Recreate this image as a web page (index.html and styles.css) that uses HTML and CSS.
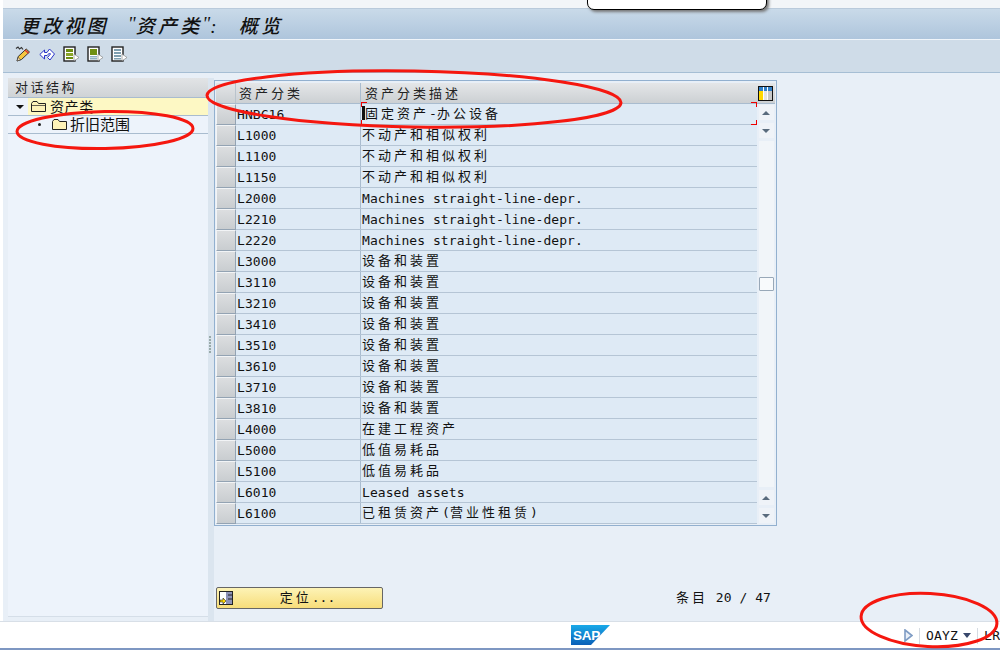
FILE: index.html
```html
<!DOCTYPE html>
<html lang="zh">
<head>
<meta charset="utf-8">
<title>更改视图 "资产类": 概览</title>
<link rel="stylesheet" href="styles.css">
</head>
<body>
<div class="app">
  <div class="topstrip"></div>
  <div class="window">
    <div class="title">更改视图 <span class="q">"</span>资产类<span class="q">"</span>: 概览</div>
    <div class="toolbar">
      <svg class="tool" viewBox="0 0 16 16"><path d="M1 2.500l2-1.500 1.500 2 2-1.500 1.500 2" fill="none" stroke="#333" stroke-width="1.2"/><path d="M2 15l1.200-4.500 8-7.500 3.300 3-8 7.500z" fill="#f6c63e" stroke="#333"/><path d="M10 4l3.500 3.200" stroke="#d33" stroke-width="1.500"/><path d="M2 15l1.200-3.500 2.300 2.200z" fill="#fbe3b8" stroke="#333" stroke-width=".5"/></svg>
      <svg class="tool" viewBox="0 0 16 16"><path d="M.8 8.500L5.500 4v2.500H8L10.500 3l5 5-4.500 6-2.500-2.500L11.500 8l-1-1L8 9.500H5.500V13z" fill="#fff" stroke="#2a34c8"/></svg>
      <svg class="tool" viewBox="0 0 16 16"><rect x="1" y="1" width="11" height="14" fill="#fff" stroke="#222" stroke-width="1.400"/><rect x="3" y="3" width="7" height="3" fill="#6f8f12"/><rect x="3" y="7" width="7" height="3" fill="#8aa52a"/><rect x="3" y="11" width="7" height="2" fill="#6f8f12"/><path d="M11 8l5 3.500-5 3.500z" fill="#fff" stroke="#777" stroke-width=".6"/></svg>
      <svg class="tool" viewBox="0 0 16 16"><rect x="1" y="1" width="11" height="14" fill="#fff" stroke="#222" stroke-width="1.400"/><rect x="3" y="3" width="7" height="6" fill="#6f8f12"/><rect x="3" y="10" width="7" height="1.500" fill="#8fb0c0"/><rect x="3" y="12" width="7" height="1.500" fill="#8fb0c0"/><path d="M11 8l5 3.500-5 3.500z" fill="#fff" stroke="#777" stroke-width=".6"/></svg>
      <svg class="tool" viewBox="0 0 16 16"><rect x="1" y="1" width="11" height="14" fill="#fff" stroke="#222" stroke-width="1.400"/><rect x="3" y="3" width="7" height="2" fill="#7f9fb0"/><rect x="3" y="6" width="7" height="2" fill="#7f9fb0"/><rect x="3" y="9" width="7" height="2" fill="#7f9fb0"/><rect x="3" y="12" width="7" height="1.500" fill="#7f9fb0"/><path d="M11 8l5 3.500-5 3.500z" fill="#fff" stroke="#777" stroke-width=".6"/></svg>
    </div>
    <div class="main">
      <aside class="tree">
        <div class="tree-head">对话结构</div>
        <div class="tree-row">
          <span class="arrow-down"></span>
          <div class="tree-sel">
            <svg class="folder" viewBox="0 0 15 11"><path d="M.5 10.500V2.500l1.500-2h4l1.500 2h7v8z" fill="#fdf2b8" stroke="#222"/><path d="M.5 4.500h14" stroke="#222" stroke-width=".7"/></svg>
            <span class="tree-text">资产类</span>
          </div>
        </div>
        <div class="tree-row sub">
          <span class="dot"></span>
          <svg class="folder" viewBox="0 0 15 11"><path d="M.5 10.500V2.500l1.500-2h4l1.500 2h7v8z" fill="#fdf2b8" stroke="#222"/></svg>
          <span class="tree-text plain">折旧范围</span>
        </div>
      </aside>
      <div class="sash"><i></i><i></i><i></i><i></i><i></i><i></i></div>
      <section class="content">
        <div class="table">
          <div class="thead">
            <div class="corner"></div>
            <div class="th c1">资产分类</div>
            <div class="th c2 th-desc">资产分类描述</div>
            <div class="settings">
              <svg viewBox="0 0 15 15"><rect x=".5" y=".5" width="14" height="14" fill="#fff" stroke="#111"/><rect x="1" y="1" width="4" height="4" fill="#2f7fc8"/><rect x="6" y="1" width="3" height="4" fill="#2f7fc8"/><rect x="10" y="1" width="4" height="4" fill="#2f7fc8"/><rect x="1" y="5" width="4" height="9" fill="#ffd800"/><rect x="6" y="5" width="3" height="9" fill="#e4e4e4"/><rect x="10" y="5" width="4" height="9" fill="#c8c8c8"/></svg>
            </div>
          </div>
          <div class="tbody">
            <div class="rows">
              <div class="row"><div class="sel"></div><div class="c1 code">HNBC16</div><div class="c2 desc"><b class="caret"></b>固定资产<span class="lat">-</span>办公设备<i class="mark left top"></i><i class="mark left bottom"></i><i class="mark right top"></i><i class="mark right bottom"></i></div></div>
              <div class="row"><div class="sel"></div><div class="c1 code">L1000</div><div class="c2 desc">不动产和相似权利</div></div>
              <div class="row"><div class="sel"></div><div class="c1 code">L1100</div><div class="c2 desc">不动产和相似权利</div></div>
              <div class="row"><div class="sel"></div><div class="c1 code">L1150</div><div class="c2 desc">不动产和相似权利</div></div>
              <div class="row"><div class="sel"></div><div class="c1 code">L2000</div><div class="c2 desc lat">Machines straight-line-depr.</div></div>
              <div class="row"><div class="sel"></div><div class="c1 code">L2210</div><div class="c2 desc lat">Machines straight-line-depr.</div></div>
              <div class="row"><div class="sel"></div><div class="c1 code">L2220</div><div class="c2 desc lat">Machines straight-line-depr.</div></div>
              <div class="row"><div class="sel"></div><div class="c1 code">L3000</div><div class="c2 desc">设备和装置</div></div>
              <div class="row"><div class="sel"></div><div class="c1 code">L3110</div><div class="c2 desc">设备和装置</div></div>
              <div class="row"><div class="sel"></div><div class="c1 code">L3210</div><div class="c2 desc">设备和装置</div></div>
              <div class="row"><div class="sel"></div><div class="c1 code">L3410</div><div class="c2 desc">设备和装置</div></div>
              <div class="row"><div class="sel"></div><div class="c1 code">L3510</div><div class="c2 desc">设备和装置</div></div>
              <div class="row"><div class="sel"></div><div class="c1 code">L3610</div><div class="c2 desc">设备和装置</div></div>
              <div class="row"><div class="sel"></div><div class="c1 code">L3710</div><div class="c2 desc">设备和装置</div></div>
              <div class="row"><div class="sel"></div><div class="c1 code">L3810</div><div class="c2 desc">设备和装置</div></div>
              <div class="row"><div class="sel"></div><div class="c1 code">L4000</div><div class="c2 desc">在建工程资产</div></div>
              <div class="row"><div class="sel"></div><div class="c1 code">L5000</div><div class="c2 desc">低值易耗品</div></div>
              <div class="row"><div class="sel"></div><div class="c1 code">L5100</div><div class="c2 desc">低值易耗品</div></div>
              <div class="row"><div class="sel"></div><div class="c1 code">L6010</div><div class="c2 desc lat">Leased assets</div></div>
              <div class="row"><div class="sel"></div><div class="c1 code">L6100</div><div class="c2 desc">已租赁资产<span class="lat">(</span>营业性租赁<span class="lat">)</span></div></div>
            </div>
            <div class="scroll">
              <div class="sb-btn"><span class="tri-up"></span></div>
              <div class="sb-btn"><span class="tri-down"></span></div>
              <div class="track"><div class="thumb"></div></div>
              <div class="sb-btn"><span class="tri-up"></span></div>
              <div class="sb-btn"><span class="tri-down"></span></div>
            </div>
          </div>
        </div>
        <div class="footer">
          <div class="btn">
            <svg class="btn-icon" viewBox="0 0 14 14"><rect x=".5" y=".5" width="13" height="13" fill="#8d92b8" stroke="#222"/><rect x="1" y="1" width="6" height="12" fill="#fff"/><path d="M9 4h4M9 8h4" stroke="#222"/><path d="M1 9h3V7l3 3-3 3v-2H1z" fill="#ffd800" stroke="#222" stroke-width=".6"/></svg>
            <span class="btn-text">定位<span class="lat">...</span></span>
          </div>
          <div class="entries">条目<span class="lat"> 20 / 47</span></div>
        </div>
      </section>
    </div>
  </div>
  <footer class="status">
    <svg class="sap" viewBox="0 0 39 20"><defs><linearGradient id="sapg" x1="0" y1="0" x2="0" y2="1"><stop offset="0" stop-color="#19a9e8"/><stop offset="1" stop-color="#0a5fb8"/></linearGradient></defs><path d="M0 0h39L20 20H0z" fill="url(#sapg)"/><text x="2" y="14.500" class="sap-text">SAP</text></svg>
    <div class="status-right">
      <svg class="play" viewBox="0 0 9 13"><path d="M1 1l7 5.500-7 5.500z" fill="#eaf0f8" stroke="#7f9cc4" stroke-width="1.600"/></svg>
      <span class="status-sep"></span>
      <span class="sys">OAYZ</span>
      <span class="tri-status"></span>
      <span class="status-sep"></span>
      <span class="sys host">LR</span>
    </div>
  </footer>
  <div class="bottomline"></div>

  <div class="popup"></div>
  <svg class="marks" viewBox="0 0 1000 650">
    <ellipse cx="414" cy="99" rx="207" ry="28" transform="rotate(1 414 99)"/>
    <ellipse cx="105" cy="130" rx="88" ry="18.500" transform="rotate(-1 105 130)"/>
    <ellipse cx="929" cy="620" rx="68" ry="26.500" transform="rotate(3 929 620)"/>
  </svg>
</div>
</body>
</html>
```
FILE: styles.css
```css
* { box-sizing: border-box; }
html, body { margin: 0; height: 100%; overflow: hidden; background: #fff; }
body { font-family: "DejaVu Sans Mono", "Noto Sans CJK SC", monospace; color: #111; }
.app { position: relative; width: 1000px; height: 650px; display: flex; flex-direction: column; overflow: hidden; }
.topstrip { height: 9px; margin-left: 3px; background: #f2f5f8; border-bottom: 1px solid #b9cadb; flex: none; }
.window { flex: 1; min-height: 0; margin-left: 3px; display: flex; flex-direction: column; background: #e8eff7; }
.title { height: 31px; flex: none; padding-left: 17px; display: flex; align-items: center; font-size: 19px; font-style: italic; font-weight: 500; letter-spacing: 3.200px; word-spacing: 11px; white-space: pre; color: #111; font-family: "Liberation Serif", "Noto Sans CJK SC", serif; background: linear-gradient(#c9dae9, #aec5dc); border-bottom: 1px solid #f0f5fa; }
.q { letter-spacing: 0; }
.toolbar { height: 33px; flex: none; display: flex; align-items: center; gap: 8px; padding: 0 0 4px 12px; background: #cfdce8; border-bottom: 1px solid #a6bed4; }
.tool { width: 16px; height: 16px; }
.main { flex: 1; min-height: 0; display: flex; padding: 5px 0 0 5px; }
.tree { width: 200px; flex: none; height: 539px; background: #edf3fb; border-bottom: 1px solid #d5dee8; }
.tree-head { height: 20px; padding-left: 7px; font-size: 13px; line-height: 20px; letter-spacing: 2.500px; color: #222; background: linear-gradient(#e2e4e6, #cfd3d6); border-bottom: 1px solid #a9bccf; }
.tree-row { height: 18px; display: flex; align-items: center; border-bottom: 1px solid #a9bccf; padding-left: 8px; }
.tree-row.sub { padding-left: 30px; }
.arrow-down { width: 0; height: 0; border-left: 4px solid transparent; border-right: 4px solid transparent; border-top: 4px solid #111; margin-right: 4px; }
.tree-sel { flex: 1; height: 17px; display: flex; align-items: center; padding-left: 3px; background: #fdf8c4; }
.dot { width: 3px; height: 3px; border-radius: 50%; background: #222; margin-right: 11px; }
.folder { width: 15px; height: 11px; flex: none; margin-right: 4px; }
.tree-text { font-size: 14px; letter-spacing: .6px; line-height: 16px; }
.tree-text.plain { font-size: 15px; letter-spacing: 0; margin-left: -1px; }
.sash { width: 6px; flex: none; display: flex; flex-direction: column; align-items: center; justify-content: center; gap: 1px; background: #dbe5ef; padding: 0 2px 11px 0; }
.sash i { width: 2px; height: 2px; background: #9aa; flex: none; }
.content { flex: 1; min-width: 0; display: flex; flex-direction: column; padding-top: 2px; }
.table { width: 563px; height: 446px; border: 1px solid #92b0cf; padding: 2px 1px 1px; background: #e8eff7; display: flex; flex-direction: column; flex: none; }
.thead { height: 21px; flex: none; display: flex; background: linear-gradient(#e4e6e8, #ccd0d3); border-bottom: 1px solid #a9bccf; }
.corner { width: 20px; flex: none; border-right: 1px solid #b9c3cc; }
.th { font-size: 13px; line-height: 21px; letter-spacing: 3px; padding-left: 3px; color: #222; }
.th-desc { padding-left: 4px; }
.c1 { width: 125px; flex: none; border-right: 1px solid #a9bccf; }
.c2 { flex: 1; min-width: 0; }
.settings { width: 19px; flex: none; display: flex; align-items: center; justify-content: center; }
.settings svg { width: 15px; height: 15px; }
.tbody { flex: 1; min-height: 0; display: flex; }
.rows { width: 541px; flex: none; display: flex; flex-direction: column; }
.row { height: 21px; flex: none; display: flex; background: #deeaf5; border-bottom: 1px solid #b5c5d5; }
.sel { width: 20px; flex: none; margin: 0 0 -1px 0; background: linear-gradient(#dcdee0, #c9cdd0); border: 1px solid #f2f4f6; border-right: 1px solid #93a3b3; border-bottom: 1px solid #93a3b3; }
.code { font-size: 13px; line-height: 20px; padding: 1px 0 0 1px; letter-spacing: .05px; }
.desc { position: relative; font-size: 13px; line-height: 20px; padding-left: 1px; letter-spacing: 3px; white-space: nowrap; }
.lat { letter-spacing: .06px; }
.desc.lat { letter-spacing: .06px; padding-top: 1px; }
.caret { display: inline-block; width: 3px; height: 14px; background: #111; vertical-align: -2px; }
.mark { position: absolute; width: 6px; height: 5px; border: 0 solid #e00; }
.mark.top { top: -2px; border-top-width: 1px; }
.mark.bottom { bottom: -1px; border-bottom-width: 1px; }
.mark.left { left: 0; border-left-width: 1px; }
.mark.right { right: 0; border-right-width: 1px; }
.scroll { flex: 1; min-width: 0; display: flex; flex-direction: column; align-items: center; padding: 1px 0; gap: 3px; background: #e8eff7; }
.sb-btn { width: 15px; height: 15px; flex: none; background: #eff3f8; display: flex; align-items: center; justify-content: center; }
.tri-up { width: 0; height: 0; border-left: 4px solid transparent; border-right: 4px solid transparent; border-bottom: 4px solid #596b7d; }
.tri-down { width: 0; height: 0; border-left: 4px solid transparent; border-right: 4px solid transparent; border-top: 4px solid #596b7d; }
.track { flex: 1; width: 15px; background: #f1f5f9; display: flex; justify-content: center; padding-top: 136px; }
.thumb { width: 15px; height: 14px; background: #f8fafc; border: 1px solid #98a8b8; border-radius: 1px; }
.footer { display: flex; align-items: center; justify-content: space-between; margin-top: 61px; padding: 0 2px 0 2px; height: 22px; width: 559px; }
.btn { width: 167px; height: 22px; display: flex; align-items: center; padding: 0 0 0 2px; border: 1px solid #666; border-radius: 2px; background: linear-gradient(#fdf3b6, #f7dd7a); }
.btn-icon { width: 14px; height: 16px; flex: none; }
.btn-text { flex: 1; text-align: center; font-size: 13px; line-height: 16px; letter-spacing: 3px; padding: 0; }
.btn-text .lat { letter-spacing: 0; }
.entries { font-size: 13px; line-height: 18px; letter-spacing: 3px; white-space: pre; }
.status { height: 27px; flex: none; position: relative; background: #fff; border-top: 1px solid #d8dfe7; display: flex; justify-content: flex-end; }
.sap { position: absolute; left: 571px; top: 3px; width: 39px; height: 20px; }
.sap-text { font: 700 13.500px "Liberation Sans", sans-serif; letter-spacing: -.2px; fill: #fff; }
.status-right { display: flex; align-items: center; width: 96px; flex: none; overflow: hidden; padding-top: 1px; }
.play { width: 9px; height: 13px; flex: none; }
.status-sep { width: 1px; height: 16px; background: #d5dbe2; margin: 0 6px; flex: none; }
.sys { font-size: 13px; letter-spacing: .2px; white-space: nowrap; }
.tri-status { width: 0; height: 0; border-left: 4.500px solid transparent; border-right: 4.500px solid transparent; border-top: 5px solid #38476b; margin-left: 5px; flex: none; }
.bottomline { height: 2px; flex: none; background: #7e97c2; }
.popup { position: absolute; left: 587px; top: -10px; width: 180px; height: 20px; background: #fff; border: 1px solid #000; border-radius: 7px; box-shadow: 2px 2px 3px #777; }
.marks { position: absolute; left: 0; top: 0; width: 1000px; height: 650px; fill: none; stroke: #f5170f; stroke-width: 3; pointer-events: none; }
```
